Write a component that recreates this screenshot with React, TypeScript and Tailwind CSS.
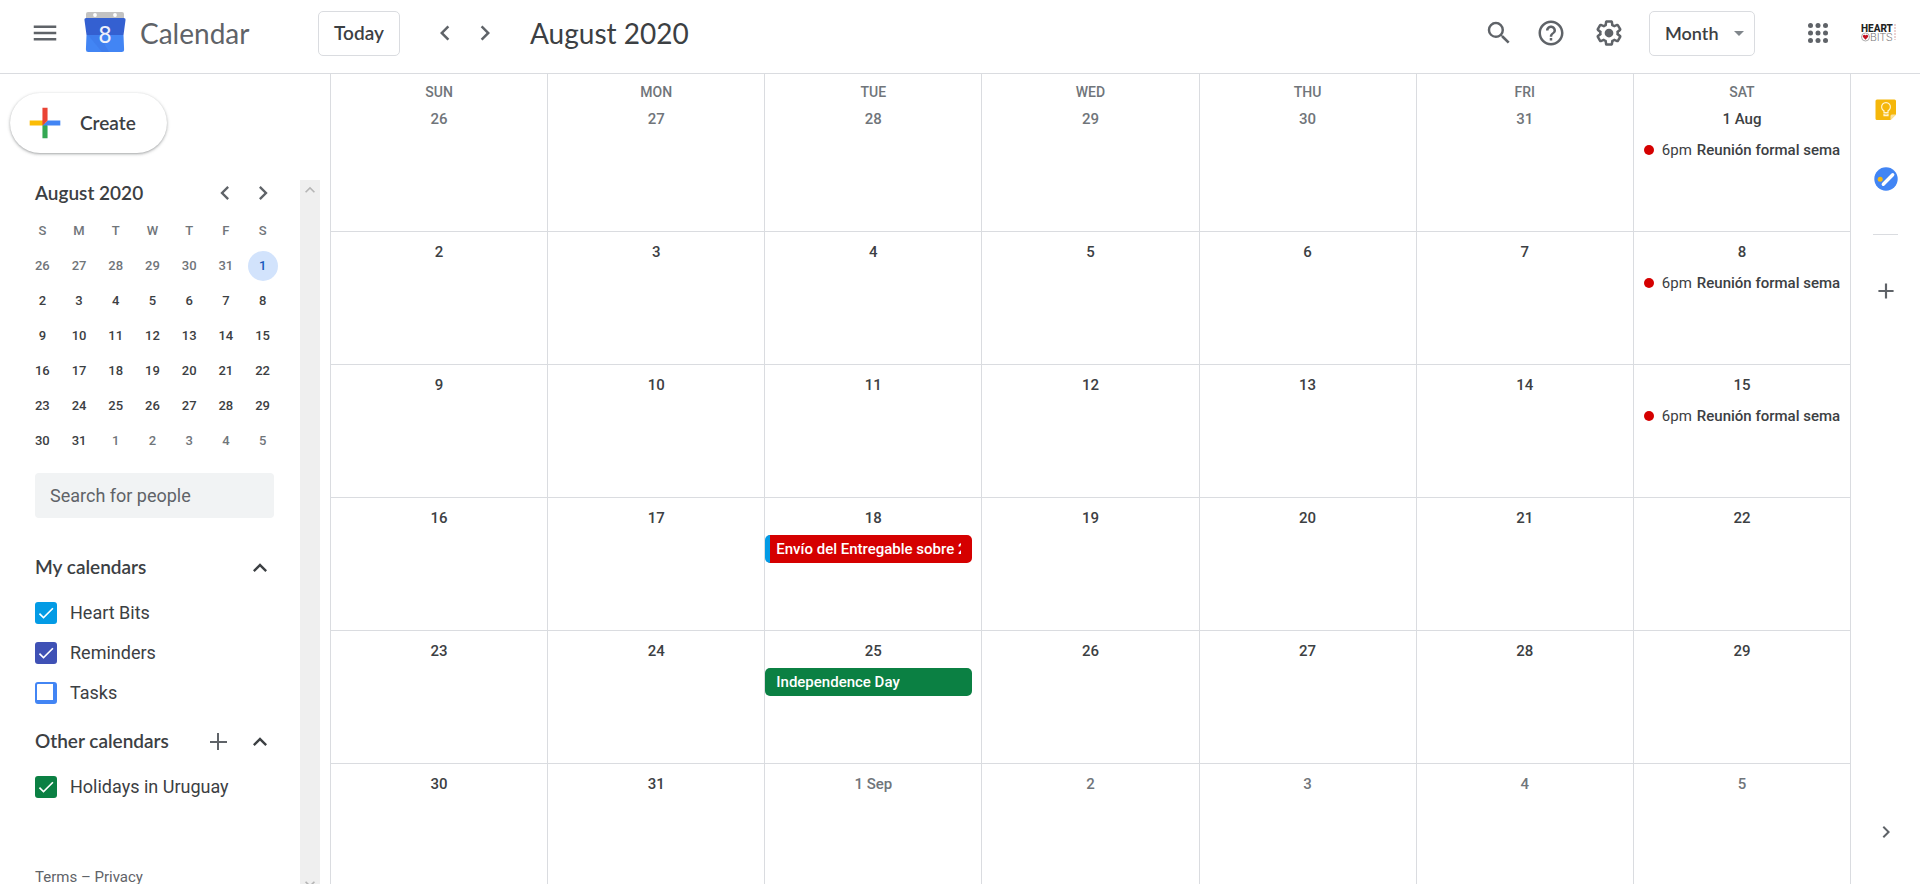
import React from 'react';
import {
  MdMenu,
  MdChevronLeft,
  MdChevronRight,
  MdSearch,
  MdHelpOutline,
  MdArrowDropDown,
  MdExpandLess,
  MdExpandMore,
  MdAdd,
  MdCheck,
} from 'react-icons/md';

type Day = {
  label: string;
  muted?: boolean;
  timed?: { time: string; title: string };
  chip?: { title: string; className: string };
};

const weekdays = ['Sun', 'Mon', 'Tue', 'Wed', 'Thu', 'Fri', 'Sat'];

const meeting = { time: '6pm', title: 'Reunión formal sema' };

const range = (from: number, to: number, muted = false): Day[] =>
  Array.from({ length: to - from + 1 }, (_, i) => ({ label: String(from + i), muted }));

const weeks: Day[][] = [
  [...range(26, 31, true), { label: '1 Aug', timed: meeting }],
  [...range(2, 7), { label: '8', timed: meeting }],
  [...range(9, 14), { label: '15', timed: meeting }],
  [
    ...range(16, 17),
    {
      label: '18',
      chip: {
        title: 'Envío del Entregable sobre 2',
        className: 'bg-[#d50000] border-l-5 border-[#039be5] pl-1.5',
      },
    },
    ...range(19, 22),
  ],
  [
    ...range(23, 24),
    { label: '25', chip: { title: 'Independence Day', className: 'bg-[#0b8043] pl-[11px]' } },
    ...range(26, 29),
  ],
  [...range(30, 31), { label: '1 Sep', muted: true }, ...range(2, 5, true)],
];

const miniWeeks: Day[][] = [
  [...range(26, 31, true), { label: '1' }],
  range(2, 8),
  range(9, 15),
  range(16, 22),
  range(23, 29),
  [...range(30, 31), ...range(1, 5, true)],
];

function GearIcon() {
  return (
    <svg viewBox="0 0 24 24" className="size-[30px]" fill="currentColor" aria-hidden="true">
      <path d="M13.85 22.25h-3.7c-.74 0-1.36-.54-1.45-1.27l-.27-1.89c-.27-.14-.53-.29-.79-.46l-1.8.72c-.7.26-1.47-.03-1.81-.65L2.2 15.53c-.35-.66-.2-1.44.36-1.88l1.53-1.19c-.01-.15-.02-.3-.02-.46 0-.15.01-.31.02-.46l-1.52-1.19c-.59-.45-.74-1.26-.37-1.88l1.85-3.19c.34-.62 1.11-.9 1.79-.63l1.81.73c.26-.17.52-.32.78-.46l.27-1.91c.09-.7.71-1.25 1.44-1.25h3.7c.74 0 1.36.54 1.45 1.27l.27 1.89c.27.14.53.29.79.46l1.8-.72c.71-.26 1.48.03 1.82.65l1.84 3.18c.36.66.2 1.44-.36 1.88l-1.52 1.19c.01.15.02.3.02.46s-.01.31-.02.46l1.52 1.19c.56.45.72 1.23.37 1.86l-1.86 3.22c-.34.62-1.11.9-1.8.63l-1.8-.72c-.26.17-.52.32-.78.46l-.27 1.91c-.1.68-.72 1.22-1.46 1.22zm-3.23-2h2.76l.37-2.55.53-.22c.44-.18.88-.44 1.34-.78l.45-.34 2.38.96 1.38-2.4-2.03-1.58.07-.56c.03-.26.06-.51.06-.78s-.03-.53-.06-.78l-.07-.56 2.03-1.58-1.39-2.4-2.39.96-.45-.35c-.42-.32-.87-.58-1.33-.77l-.52-.22-.37-2.55h-2.76l-.37 2.55-.53.21c-.44.19-.88.44-1.34.79l-.45.33-2.38-.95-1.39 2.39 2.03 1.58-.07.56a7 7 0 0 0-.06.79c0 .26.02.53.06.78l.07.56-2.03 1.58 1.38 2.4 2.39-.96.45.35c.43.33.86.58 1.33.77l.53.22.38 2.55z" />
      <circle cx="12" cy="12" r="3.5" />
    </svg>
  );
}

function AppsIcon() {
  return (
    <svg viewBox="0 0 24 24" className="size-[30px]" fill="currentColor" aria-hidden="true">
      {[6, 12, 18].map((cy) => [6, 12, 18].map((cx) => <circle key={`${cx}-${cy}`} cx={cx} cy={cy} r="2" />))}
    </svg>
  );
}

function CalendarLogo() {
  return (
    <svg viewBox="0 0 42 42" className="size-[42px]" aria-hidden="true">
      <path d="M4 0h34a2 2 0 0 1 2 2v7H2V2a2 2 0 0 1 2-2z" fill="#c2c2c2" />
      <circle cx="11" cy="3" r="1.9" fill="#fff" />
      <circle cx="31" cy="3" r="1.9" fill="#fff" />
      <path d="M2.5 23h37l.6 14.500a2.500 2.500 0 0 1-2.500 2.500h-33A2.500 2.500 0 0 1 1.900 37.500z" fill="#4285f4" />
      <path d="M2.500 6h37a2 2 0 0 1 2 2.300L39.500 23h-37L.5 8.300A2 2 0 0 1 2.500 6z" fill="#3460d1" />
      <path d="M4 23h11l10 17H18z" fill="#3367d6" opacity=".25" />
      <text
        x="21"
        y="31"
        textAnchor="middle"
        fontFamily="Roboto, sans-serif"
        fontSize="24"
        fill="#eef1fa"
      >
        8
      </text>
    </svg>
  );
}

function AccountLogo() {
  return (
    <svg viewBox="0 0 36 20" className="h-5 w-9" role="img" aria-label="Account">
      <text x="0" y="9" fontFamily="Roboto, sans-serif" fontWeight="800" fontSize="10" fill="#222">
        HEART
      </text>
      <text x="9" y="18" fontFamily="Roboto, sans-serif" fontWeight="300" fontSize="11" fill="#777">
        BITS
      </text>
      <circle cx="4.500" cy="14" r="4" fill="#fff" stroke="#999" strokeWidth=".8" />
      <path d="M4.500 16.800 2 14a1.400 1.400 0 0 1 2.500-1.500A1.400 1.400 0 0 1 7 14z" fill="#c01020" />
      <path d="M34 1v16" stroke="#d9a5a5" strokeWidth="1" strokeDasharray="2 1" />
    </svg>
  );
}

function CreateIcon() {
  return (
    <svg viewBox="0 0 36 36" className="size-[46px]" aria-hidden="true">
      <path fill="#34A853" d="M16 16v14h4V20z" />
      <path fill="#4285F4" d="M30 16H20l-4 4h14z" />
      <path fill="#FBBC05" d="M6 16v4h10l4-4z" />
      <path fill="#EA4335" d="M20 16V6h-4v14z" />
    </svg>
  );
}

function KeepIcon() {
  return (
    <svg viewBox="0 0 22 22" className="size-[22px]" aria-hidden="true">
      <path
        d="M2 .5h17.500a1.500 1.500 0 0 1 1.500 1.500v13.500L15.500 21H2A1.500 1.500 0 0 1 .5 19.500V2A1.500 1.500 0 0 1 2 .5z"
        fill="#f5b70a"
      />
      <path d="M21 15.500h-4a1.500 1.500 0 0 0-1.500 1.500v4z" fill="#fce29b" />
      <path
        d="M9 13.500v-1.600a4.400 4.400 0 1 1 4 0v1.600zM9 15h4v1.600H9z"
        fill="none"
        stroke="#fff3d0"
        strokeWidth="1.2"
      />
    </svg>
  );
}

function TasksIcon() {
  return (
    <svg viewBox="0 0 24 24" className="size-6" aria-hidden="true">
      <circle cx="12" cy="12" r="11.7" fill="#4285f4" />
      <circle cx="6.2" cy="12.2" r="2.5" fill="#f5b912" />
      <path d="M9.300 17.200 18.700 7.800" stroke="#fff" strokeWidth="3.4" strokeLinecap="round" />
    </svg>
  );
}

function CalendarToggle({ name, checked, className }: { name: string; checked: boolean; className: string }) {
  return (
    <label className="flex h-10 items-center gap-[13px] text-lg text-[#3c4043]">
      <span className="relative flex size-[22px]">
        <input
          type="checkbox"
          defaultChecked={checked}
          className={`peer size-[22px] appearance-none rounded-[3px] ${className}`}
        />
        <MdCheck className="pointer-events-none absolute inset-px hidden size-5 text-white peer-checked:block" />
      </span>
      {name}
    </label>
  );
}

function MiniCalendar() {
  return (
    <section aria-label="Month navigator">
      <div className="flex h-[42px] items-center pr-[18px]">
        <h2 className="grow pl-[35px] font-[Lato] text-[19px] font-semibold text-[#3c4043]">August 2020</h2>
        <button aria-label="Previous month" className="flex w-[38px] justify-center text-[#5f6368]">
          <MdChevronLeft className="size-7" />
        </button>
        <button aria-label="Next month" className="flex w-[38px] justify-center text-[#5f6368]">
          <MdChevronRight className="size-7" />
        </button>
      </div>
      <table className="ml-6 w-[257px] table-fixed text-center text-[13px] font-medium">
        <thead>
          <tr className="h-[34px] text-[#70757a]">
            {weekdays.map((day) => (
              <th key={day} className="p-0 font-medium">
                {day[0]}
              </th>
            ))}
          </tr>
        </thead>
        <tbody>
          {miniWeeks.map((week, row) => (
            <tr key={row} className="h-[35px]">
              {week.map((day, col) => (
                <td key={col} className="p-0">
                  <button
                    className={
                      row === 0 && col === 6
                        ? 'size-[30px] rounded-full bg-[#d2e3fc] text-[#185abc]'
                        : day.muted
                          ? 'size-[30px] text-[#70757a]'
                          : 'size-[30px] text-[#3c4043]'
                    }
                  >
                    {day.label}
                  </button>
                </td>
              ))}
            </tr>
          ))}
        </tbody>
      </table>
    </section>
  );
}

function Sidebar() {
  return (
    <aside className="flex w-[330px] shrink-0 flex-col">
      <div className="pt-[19px] pb-[19px] pl-2.5">
        <button className="flex h-[60px] w-[157px] items-center gap-3 rounded-full pl-3 font-[Lato] text-[19px] font-semibold text-[#3c4043] shadow-[0_1px_2px_0_rgba(60,64,67,0.3),0_1px_3px_1px_rgba(60,64,67,0.15)]">
          <CreateIcon />
          Create
        </button>
      </div>
      <div className="flex min-h-0 grow">
        <div className="w-[300px] overflow-hidden">
          <MiniCalendar />
          <input
            type="text"
            aria-label="Search for people"
            placeholder="Search for people"
            className="mt-[15px] ml-[35px] h-[45px] w-[239px] rounded bg-[#f1f3f4] px-[15px] text-lg placeholder:text-[#5f6368]"
          />
          <section className="mt-6 pr-[26px] pl-[35px]">
            <div className="flex h-[51px] items-center justify-between">
              <h2 className="font-[Lato] text-[19px] font-semibold text-[#3c4043]">My calendars</h2>
              <button aria-label="Collapse my calendars" className="text-[#3c4043]">
                <MdExpandLess className="size-7" />
              </button>
            </div>
            <CalendarToggle name="Heart Bits" checked className="bg-[#039be5]" />
            <CalendarToggle name="Reminders" checked className="bg-[#3f51b5]" />
            <CalendarToggle
              name="Tasks"
              checked={false}
              className="border-2 border-r-4 border-b-4 border-[#4285f4]"
            />
          </section>
          <section className="mt-[3px] pr-[26px] pl-[35px]">
            <div className="flex h-[51px] items-center gap-4">
              <h2 className="grow font-[Lato] text-[19px] font-semibold text-[#3c4043]">Other calendars</h2>
              <button aria-label="Add other calendars" className="text-[#5f6368]">
                <svg viewBox="0 0 24 24" className="size-6" stroke="currentColor" strokeWidth="2" aria-hidden="true">
                  <path d="M12 3v17M4 12h17" />
                </svg>
              </button>
              <button aria-label="Collapse other calendars" className="text-[#3c4043]">
                <MdExpandLess className="size-7" />
              </button>
            </div>
            <CalendarToggle name="Holidays in Uruguay" checked className="bg-[#0b8043]" />
          </section>
          <footer className="mt-[59px] pl-[35px] text-[15px] text-[#5f6368]">
            <a href="#terms">Terms</a> – <a href="#privacy">Privacy</a>
          </footer>
        </div>
        <div className="mt-2 -mb-2.5 flex w-5 flex-col items-center justify-between bg-[#efefef] text-[#b5b5b5]">
          <MdExpandLess className="size-5" />
          <MdExpandMore className="size-5" />
        </div>
      </div>
    </aside>
  );
}

function DayCell({ day }: { day: Day }) {
  return (
    <td className="border-b border-l border-[#dadce0] p-0 pt-2 align-top text-[15px] font-medium text-[#3c4043]">
      <div
        className={
          day.muted ? 'mb-[5px] h-6 text-center leading-6 text-[#70757a]' : 'mb-[5px] h-6 text-center leading-6'
        }
      >
        {day.label}
      </div>
      {day.timed && (
        <a href="#event" className="mr-2 flex h-7 items-center overflow-hidden pl-2.5 whitespace-nowrap">
          <span className="mr-2 size-2.5 shrink-0 rounded-full bg-[#d50000]" />
          <span className="mr-[5px] font-normal">{day.timed.time}</span>
          <span className="overflow-hidden">{day.timed.title}</span>
        </a>
      )}
      {day.chip && (
        <a
          href="#event"
          className={`mr-[9px] flex h-7 items-center rounded-[5px] pr-[11px] whitespace-nowrap text-white ${day.chip.className}`}
        >
          <span className="overflow-hidden">{day.chip.title}</span>
        </a>
      )}
    </td>
  );
}

function MonthGrid() {
  return (
    <main className="min-w-0 grow overflow-hidden">
      <table className="w-full table-fixed border-separate border-spacing-0">
        <thead>
          <tr className="h-[25px]">
            {weekdays.map((day) => (
              <th
                key={day}
                className="border-l border-[#dadce0] p-0 pt-3 text-center text-sm leading-[13px] font-medium text-[#70757a] uppercase"
              >
                {day}
              </th>
            ))}
          </tr>
        </thead>
        <tbody>
          {weeks.map((week, i) => (
            <tr key={i} className="h-[133px]">
              {week.map((day, j) => (
                <DayCell key={j} day={day} />
              ))}
            </tr>
          ))}
        </tbody>
      </table>
    </main>
  );
}

function Header() {
  return (
    <header className="flex h-[74px] shrink-0 items-center border-b border-[#dadce0] pb-[7px] text-[#5f6368]">
      <button aria-label="Main menu" className="ml-[30px]">
        <MdMenu className="size-[30px]" />
      </button>
      <div className="ml-6 flex w-[234px] items-center gap-3.5">
        <CalendarLogo />
        <span className="font-[Lato] text-[28px] leading-9">Calendar</span>
      </div>
      <button className="h-[45px] w-[82px] rounded-[5px] border border-[#dadce0] font-[Lato] text-[19px] font-semibold text-[#3c4043]">
        Today
      </button>
      <button aria-label="Previous month" className="ml-[30px]">
        <MdChevronLeft className="size-[30px]" />
      </button>
      <button aria-label="Next month" className="ml-2.5">
        <MdChevronRight className="size-[30px]" />
      </button>
      <h1 className="ml-[30px] grow font-[Lato] text-[28px] leading-9 text-[#3c4043]">August 2020</h1>
      <button aria-label="Search" className="mr-[22px]">
        <MdSearch className="size-[30px]" />
      </button>
      <button aria-label="Support" className="mr-7">
        <MdHelpOutline className="size-[30px]" />
      </button>
      <button aria-label="Settings menu" className="mr-[25px]">
        <GearIcon />
      </button>
      <div className="relative">
        <select
          aria-label="View"
          className="h-[45px] w-[106px] appearance-none rounded-[5px] border border-[#dadce0] pl-[15px] font-[Lato] text-lg font-semibold text-[#3c4043]"
        >
          <option>Month</option>
        </select>
        <MdArrowDropDown className="pointer-events-none absolute top-2.5 right-1 size-6 text-[#80868b]" />
      </div>
      <button aria-label="Google apps" className="mr-7 ml-12">
        <AppsIcon />
      </button>
      <button aria-label="Account" className="mr-[23px]">
        <AccountLogo />
      </button>
    </header>
  );
}

function SidePanel() {
  return (
    <aside className="flex w-[70px] shrink-0 flex-col items-center border-l border-[#dadce0] text-[#5f6368]">
      <button aria-label="Keep" className="mt-[25px]">
        <KeepIcon />
      </button>
      <button aria-label="Tasks" className="mt-[46px]">
        <TasksIcon />
      </button>
      <hr className="mt-[43px] w-[25px] border-[#dadce0]" />
      <button aria-label="Get add-ons" className="mt-[43px]">
        <MdAdd className="size-[26px]" />
      </button>
      <button aria-label="Hide side panel" className="mt-auto mb-10">
        <MdChevronRight className="size-6" />
      </button>
    </aside>
  );
}

export default function App() {
  return (
    <div className="flex h-screen flex-col overflow-hidden bg-white font-[Roboto,sans-serif] text-[#3c4043]">
      <Header />
      <div className="flex min-h-0 grow">
        <Sidebar />
        <MonthGrid />
        <SidePanel />
      </div>
    </div>
  );
}
